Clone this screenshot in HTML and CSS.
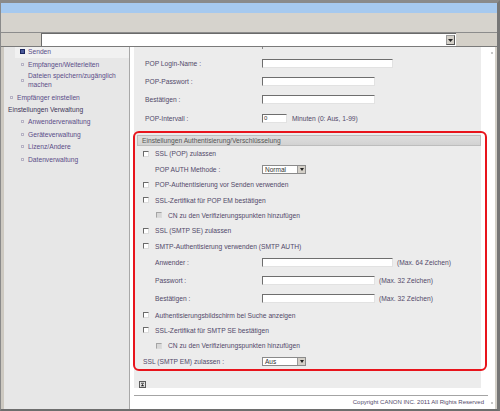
FILE: index.html
```html
<!DOCTYPE html>
<html lang="de">
<head>
<meta charset="utf-8">
<title>Einstellungen Authentisierung</title>
<link rel="stylesheet" href="styles.css">
</head>
<body>
<div class="window">
  <div class="titlebar"></div>
  <div class="toolbar"></div>
  <div class="addressbar">
    <div class="addr-left"></div>
    <div class="addr-input"><span class="addr-btn"><svg width="5" height="3" viewBox="0 0 5 3"><path d="M0 0H5L2.5 3Z" fill="#222"/></svg></span></div>
    <div class="addr-right"></div>
  </div>
  <div class="content">
    <nav class="nav">
      <div class="nav-list">
        <div class="nav-item l2 active"><span class="bullet sel"></span><span>Senden</span></div>
        <div class="nav-item l2"><span class="bullet"></span><span>Empfangen/Weiterleiten</span></div>
        <div class="nav-item l2 wrap"><span class="bullet"></span><span>Dateien speichern/zugänglich<br>machen</span></div>
        <div class="nav-item l1"><span class="bullet"></span><span>Empfänger einstellen</span></div>
        <div class="nav-item l0"><span>Einstellungen Verwaltung</span></div>
        <div class="nav-item l2"><span class="bullet"></span><span>Anwenderverwaltung</span></div>
        <div class="nav-item l2"><span class="bullet"></span><span>Geräteverwaltung</span></div>
        <div class="nav-item l2"><span class="bullet"></span><span>Lizenz/Andere</span></div>
        <div class="nav-item l2"><span class="bullet"></span><span>Datenverwaltung</span></div>
      </div>
    </nav>
    <div class="page">
      <main class="panel">
        <div class="tick"></div>
        <div class="form">
          <div class="row"><span class="label">POP Login-Name :</span><span class="input wide"></span></div>
          <div class="row"><span class="label">POP-Passwort :</span><span class="input mid"></span></div>
          <div class="row"><span class="label">Bestätigen :</span><span class="input mid"></span></div>
          <div class="row"><span class="label">POP-Intervall :</span><span class="input small">0</span><span class="note">Minuten (0: Aus, 1-99)</span></div>
        </div>
        <section class="auth">
          <div class="auth-head">Einstellungen Authentisierung/Verschlüsselung</div>
          <div class="cb-row"><span class="cb"></span><span>SSL (POP) zulassen</span></div>
          <div class="cb-row sub-label"><span class="label">POP AUTH Methode :</span><span class="select"><span class="sel-text">Normal</span><span class="sel-btn"><svg width="4" height="3" viewBox="0 0 4 3"><path d="M0 0H4L2 3Z" fill="#222"/></svg></span></span></div>
          <div class="cb-row"><span class="cb"></span><span>POP-Authentisierung vor Senden verwenden</span></div>
          <div class="cb-row"><span class="cb"></span><span>SSL-Zertifikat für POP EM bestätigen</span></div>
          <div class="cb-row indent"><span class="cb disabled"></span><span>CN zu den Verifizierungspunkten hinzufügen</span></div>
          <div class="cb-row"><span class="cb"></span><span>SSL (SMTP SE) zulassen</span></div>
          <div class="cb-row"><span class="cb"></span><span>SMTP-Authentisierung verwenden (SMTP AUTH)</span></div>
          <div class="in-row"><span class="label">Anwender :</span><span class="input wide"></span><span class="max">(Max. 64 Zeichen)</span></div>
          <div class="in-row"><span class="label">Passwort :</span><span class="input mid"></span><span class="max">(Max. 32 Zeichen)</span></div>
          <div class="in-row"><span class="label">Bestätigen :</span><span class="input mid"></span><span class="max">(Max. 32 Zeichen)</span></div>
          <div class="cb-row"><span class="cb"></span><span>Authentisierungsbildschirm bei Suche anzeigen</span></div>
          <div class="cb-row"><span class="cb"></span><span>SSL-Zertifikat für SMTP SE bestätigen</span></div>
          <div class="cb-row indent"><span class="cb disabled"></span><span>CN zu den Verifizierungspunkten hinzufügen</span></div>
          <div class="cb-row top-label"><span class="label">SSL (SMTP EM) zulassen :</span><span class="select"><span class="sel-text">Aus</span><span class="sel-btn"><svg width="4" height="3" viewBox="0 0 4 3"><path d="M0 0H4L2 3Z" fill="#222"/></svg></span></span></div>
        </section>
        <div class="to-top"><svg width="7" height="7" viewBox="0 0 7 7"><rect x="0.5" y="0.5" width="6" height="6" fill="#e4e4e4" stroke="#5a5a5a"/><rect x="2" y="1.8" width="3" height="0.8" fill="#222"/><path d="M1.8 5.2H5.2L3.5 3.1Z" fill="#222"/></svg></div>
      </main>
      <footer class="footer">Copyright CANON INC. 2011 All Rights Reserved</footer>
    </div>
    <div class="scroll"><span class="mark"></span><span class="mark"></span></div>
    <div class="edge"></div>
  </div>
</div>
</body>
</html>
```
FILE: styles.css
```css
* { box-sizing: border-box; }
html, body { margin: 0; padding: 0; }
body {
  width: 500px;
  height: 411px;
  overflow: hidden;
  background: #d4d0c8;
  font-family: "Liberation Sans", Arial, sans-serif;
  font-size: 6.7px;
  color: #52496a;
}
.window {
  width: 500px;
  height: 411px;
  display: flex;
  flex-direction: column;
  border-top: 3px solid #8a8a8a;
  border-left: 1px solid #8a8a8a;
  border-right: 3px solid #767676;
  border-bottom: 2px solid #6e6e6e;
}
.titlebar { height: 10px; background: #a6c9ef; }
.toolbar { height: 19px; background: #d6d3cd; }
.addressbar {
  height: 15px;
  display: flex;
  border-top: 1px solid #8c8c8c;
  border-bottom: 1px solid #7a7a7a;
  background: #d4d0c8;
}
.addr-left { width: 40px; }
.addr-input {
  width: 415px;
  background: #fff;
  border-top: 1px solid #6a6a6a;
  border-left: 1px solid #6a6a6a;
  display: flex;
  justify-content: flex-end;
  align-items: center;
  padding-right: 1px;
}
.addr-btn {
  width: 9px;
  height: 10px;
  background: #d4d0c8;
  border: 1px solid #9a9a9a;
  border-right-color: #555;
  border-bottom-color: #555;
  display: flex;
  align-items: center;
  justify-content: center;
}
.addr-right { flex: 1; }

.content { flex: 1; display: flex; min-height: 0; }
.nav {
  width: 129px;
  background: #e7e7e7;
  border-left: 3px solid #cdc9c1;
  border-right: 1px solid #a8a8a8;
  overflow: hidden;
}
.nav-list { margin-top: -1.5px; }
.nav-item {
  height: 12.4px;
  display: flex;
  align-items: center;
  gap: 4px;
  color: #5b4d88;
  white-space: nowrap;
}
.nav-item.wrap { height: 20.6px; line-height: 8.3px; }
.nav-item.l2 { padding-left: 17px; }
.nav-item.l1 { padding-left: 6px; }
.nav-item.l0 { padding-left: 4px; color: #3e3658; }
.nav-item.active { background: #f1f1f1; margin-left: 11px; padding-left: 5px; gap: 3px; }
.bullet {
  width: 3px;
  height: 3px;
  border: 1px solid #b6b2c4;
  background: #efefef;
  flex: none;
}
.bullet.sel {
  width: 5px;
  height: 5px;
  background: #4a5a9a;
  border: 1.5px solid #1c2660;
}

.page {
  width: 358px;
  background: #fff;
  padding-left: 4px;
  display: flex;
  flex-direction: column;
}
.panel {
  height: 341px;
  width: 347px;
  background: #ececec;
  padding: 0 0 0 11px;
}
.tick { width: 1px; height: 2px; background: #8a8a8a; margin-left: 117px; margin-bottom: 5px; }
.row {
  height: 18.3px;
  display: flex;
  align-items: center;
}
.label { width: 117px; flex: none; }
.input {
  display: inline-block;
  height: 9px;
  background: #fff;
  border-top: 1px solid #6e6e6e;
  border-left: 1px solid #6e6e6e;
  border-right: 1px solid #e2e2e2;
  border-bottom: 1px solid #e2e2e2;
  flex: none;
  font-size: 6px;
  line-height: 7px;
  padding-left: 1px;
  color: #333;
}
.input.wide { width: 131px; }
.input.mid { width: 113px; }
.input.small { width: 25px; }
.note { margin-left: 5px; }

.auth {
  position: relative;
  margin: 8px 0 0 -8px;
  width: 344px;
}
.auth::after {
  content: "";
  position: absolute;
  top: -4px;
  left: -4px;
  right: -6px;
  bottom: -2px;
  border: 2px solid #e8141c;
  border-radius: 6px;
  pointer-events: none;
}
.auth-head {
  height: 11px;
  display: flex;
  align-items: center;
  padding-left: 4px;
  background: linear-gradient(#dedede, #d2d2d2);
  border: 1px solid #bdbdbd;
  color: #555;
}
.cb-row {
  height: 15.4px;
  display: flex;
  align-items: center;
  gap: 6px;
  padding-left: 6px;
}
.cb-row.indent { padding-left: 19px; }
.cb-row.sub-label { padding-left: 18px; gap: 0; }
.cb-row.sub-label .label { width: 107px; }
.cb-row.top-label { padding-left: 6px; gap: 0; }
.cb-row.top-label .label { width: 119px; }
.cb {
  width: 6px;
  height: 6px;
  background: #fff;
  border-top: 1px solid #6a6a6a;
  border-left: 1px solid #6a6a6a;
  border-right: 1px solid #dcdcdc;
  border-bottom: 1px solid #dcdcdc;
  flex: none;
}
.cb.disabled { background: #d8d8d8; border-top-color: #a4a4a4; border-left-color: #a4a4a4; }
.in-row {
  height: 17.8px;
  display: flex;
  align-items: center;
  padding-left: 18px;
}
.in-row .label { width: 107px; }
.max { margin-left: 4px; }
.select {
  width: 44px;
  height: 9px;
  display: flex;
  background: #fff;
  border: 1px solid #8a8a8a;
  flex: none;
}
.sel-text { flex: 1; font-size: 6.5px; line-height: 7px; padding-left: 2px; color: #333; }
.sel-btn {
  width: 8px;
  background: #d4d0c8;
  border-left: 1px solid #9a9a9a;
  display: flex;
  align-items: center;
  justify-content: center;
}
.to-top { margin: 12px 0 0 -6px; height: 7px; line-height: 0; }

.footer {
  margin-top: 7px;
  border-top: 1px solid #a4a4a4;
  flex: 1;
  text-align: right;
  padding: 3px 4px 0 0;
  font-size: 6px;
  color: #52496a;
}
.scroll {
  width: 7px;
  background: #fff;
  display: flex;
  flex-direction: column;
  justify-content: space-between;
  align-items: center;
  padding: 5px 0 5px;
}
.mark { width: 2px; height: 2px; background: #c8c8c8; }
.edge { flex: 1; background: #d4d0c8; }
```
